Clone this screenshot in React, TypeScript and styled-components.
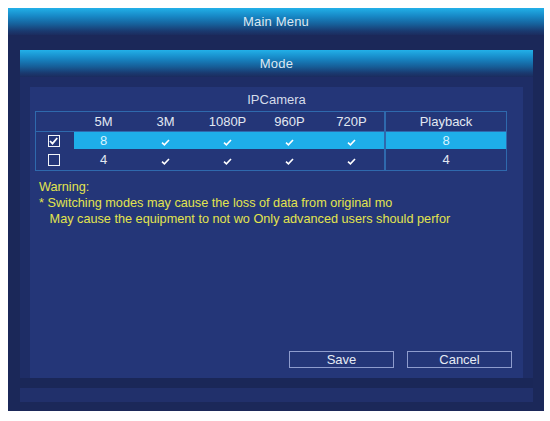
import React from "react";
import styled, { createGlobalStyle } from "styled-components";

const Global = createGlobalStyle`
  html, body { margin: 0; padding: 0; background: #ffffff; }
  body { font-family: "Liberation Sans", Arial, sans-serif; }
  #root { padding: 8px 0 0 8px; }
`;

const Frame = styled.div`
  width: 536px;
  height: 403px;
  background: #1b2859;
  display: flex;
  flex-direction: column;
`;

const Header = styled.div<{ $h: number }>`
  height: ${(p) => p.$h}px;
  flex: none;
  display: flex;
  align-items: center;
  justify-content: center;
  background: linear-gradient(
    to bottom,
    #22b0e8 0%,
    #1788c6 30%,
    #16609a 60%,
    #1a3a70 85%,
    #1b2c5e 100%
  );
  color: #dce8f2;
  font-size: 13px;
  letter-spacing: 0.2px;
`;

const FrameBody = styled.div`
  flex: 1;
  display: flex;
  padding: 15px 11px 9px 12px;
`;

const Panel = styled.div`
  flex: 1;
  display: flex;
  flex-direction: column;
  background: #1d2c63;
`;

const PanelBody = styled.div`
  flex: 1;
  display: flex;
  padding: 10px 10px 24px 10px;
  background: linear-gradient(
    to bottom,
    #1e2d66 0,
    #1e2d66 calc(100% - 24px),
    #1a2758 calc(100% - 24px),
    #1a2758 calc(100% - 14px),
    #21306b calc(100% - 14px),
    #21306b 100%
  );
`;

const Content = styled.div`
  flex: 1;
  display: flex;
  flex-direction: column;
  background: #243678;
`;

const Title = styled.div`
  height: 24px;
  display: flex;
  align-items: center;
  justify-content: center;
  color: #d4dcea;
  font-size: 13px;
`;

const Table = styled.div`
  margin: 0 16px 0 5px;
  display: grid;
  grid-template-columns: 38px repeat(5, 62px) 1fr;
  grid-template-rows: 20px 17px 21px;
  border: 1px solid #2f69ad;
`;

const Cell = styled.div<{ $hl?: boolean; $head?: boolean; $divider?: boolean }>`
  display: flex;
  align-items: center;
  justify-content: center;
  padding-right: ${(p) => (p.$divider ? "0" : "3px")};
  font-size: 13px;
  color: ${(p) => (p.$hl ? "#d8f4ff" : "#e2e8f2")};
  background: ${(p) => (p.$hl ? "#1eaee9" : "transparent")};
  border-bottom: ${(p) => (p.$head ? "1px solid #2f69ad" : "none")};
  border-left: ${(p) => (p.$divider ? "2px solid #2f69ad" : "none")};
`;

const Box = styled.div`
  width: 10px;
  height: 10px;
  border: 1.5px solid #f2f4f8;
  display: flex;
  align-items: center;
  justify-content: center;
`;

const Warning = styled.div`
  margin-top: 8px;
  padding-left: 9px;
  color: #e2e44e;
  font-size: 12.7px;
  line-height: 16px;
  white-space: pre;
`;

const Buttons = styled.div`
  margin-top: auto;
  margin-bottom: 10px;
  margin-right: 11px;
  display: flex;
  justify-content: flex-end;
  gap: 13px;
`;

const Button = styled.button`
  width: 105px;
  height: 17px;
  padding: 0;
  background: transparent;
  border: 1px solid #8e9ccd;
  color: #e6ebf4;
  font-family: "Liberation Sans", Arial, sans-serif;
  font-size: 13px;
  line-height: 15px;
`;

const Tick = () => (
  <svg width="9" height="7" viewBox="0 0 9 7" style={{ marginTop: 3 }}>
    <path d="M1 3.6 L3.4 5.8 L8 1" fill="none" stroke="#ffffff" strokeWidth="1.6" />
  </svg>
);

const BoxTick = () => (
  <svg width="9" height="8" viewBox="0 0 9 8">
    <path d="M1 4 L3.5 6.6 L8.2 1" fill="none" stroke="#ffffff" strokeWidth="1.8" />
  </svg>
);

const heads = ["5M", "3M", "1080P", "960P", "720P"];

const rows = [
  { checked: true, value: "8", hl: true },
  { checked: false, value: "4", hl: false },
];

export default function App() {
  return (
    <>
      <Global />
      <Frame>
        <Header $h={27}>Main Menu</Header>
        <FrameBody>
          <Panel>
            <Header $h={27}>Mode</Header>
            <PanelBody>
              <Content>
                <Title>IPCamera</Title>
                <Table>
                  <Cell $head />
                  {heads.map((h) => (
                    <Cell key={h} $head>
                      {h}
                    </Cell>
                  ))}
                  <Cell $head $divider>
                    Playback
                  </Cell>
                  {rows.map((r, i) => (
                    <React.Fragment key={i}>
                      <Cell>
                        <Box>{r.checked && <BoxTick />}</Box>
                      </Cell>
                      <Cell $hl={r.hl}>{r.value}</Cell>
                      {[0, 1, 2, 3].map((k) => (
                        <Cell key={k} $hl={r.hl}>
                          <Tick />
                        </Cell>
                      ))}
                      <Cell $hl={r.hl} $divider>
                        {r.value}
                      </Cell>
                    </React.Fragment>
                  ))}
                </Table>
                <Warning>
                  {"Warning:\n* Switching modes may cause the loss of data from original mo\n   May cause the equipment to not wo Only advanced users should perfor"}
                </Warning>
                <Buttons>
                  <Button>Save</Button>
                  <Button>Cancel</Button>
                </Buttons>
              </Content>
            </PanelBody>
          </Panel>
        </FrameBody>
      </Frame>
    </>
  );
}
